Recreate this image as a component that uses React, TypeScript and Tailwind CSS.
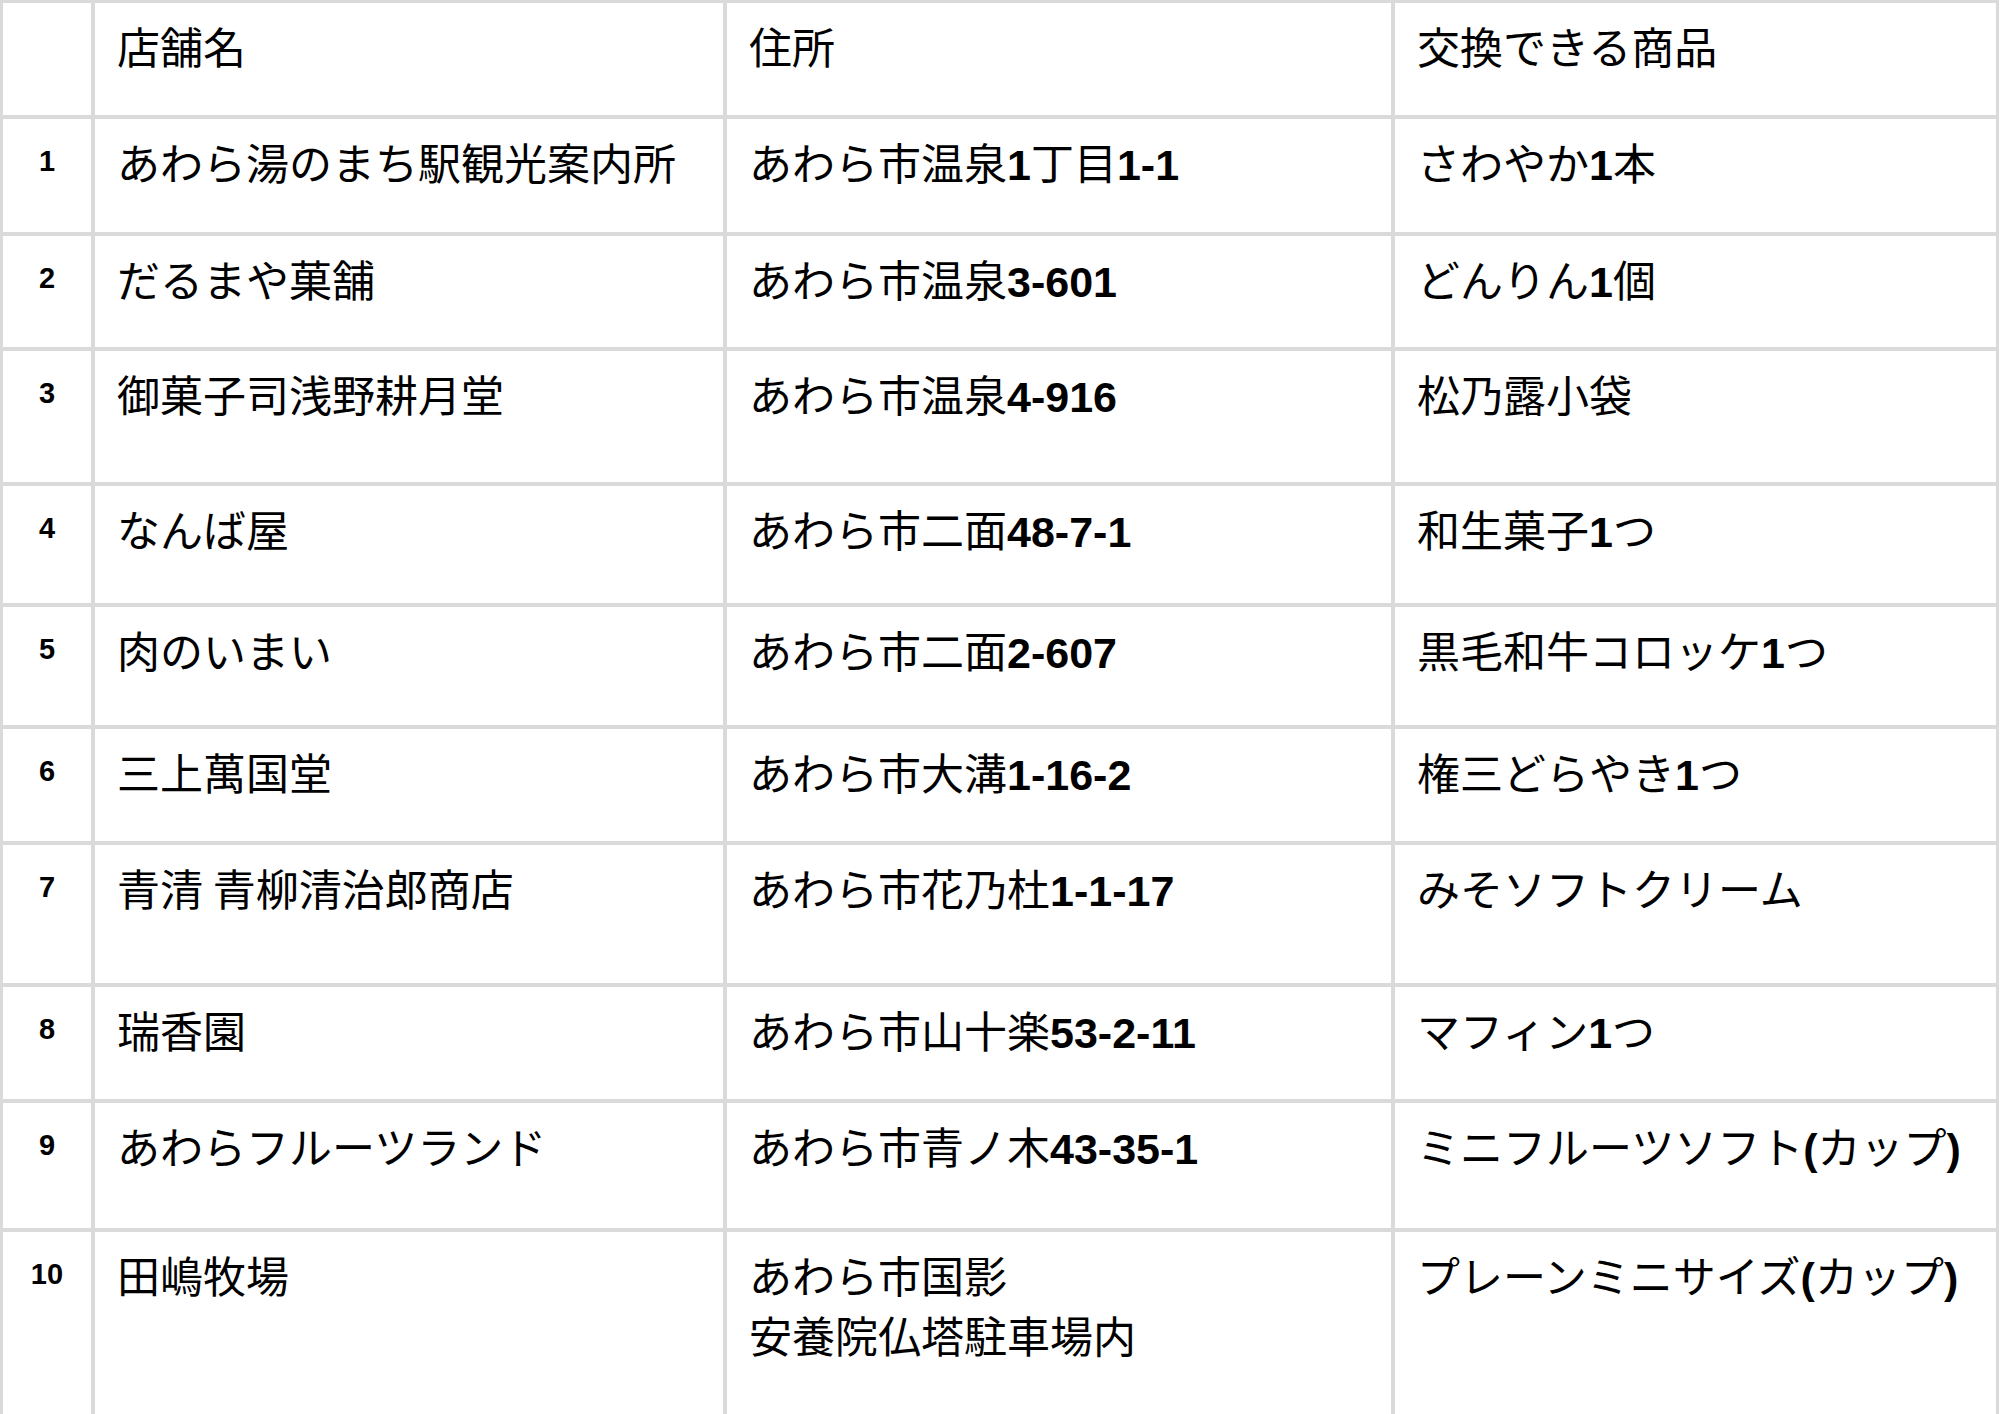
type Row = {
  no: string;
  name: string;
  address: string[];
  item: string;
  h: string;
};

const rows: Row[] = [
  { no: '1', name: 'あわら湯のまち駅観光案内所', address: ['あわら市温泉1丁目1-1'], item: 'さわやか1本', h: 'h-[113px]' },
  { no: '2', name: 'だるまや菓舗', address: ['あわら市温泉3-601'], item: 'どんりん1個', h: 'h-[111px]' },
  { no: '3', name: '御菓子司浅野耕月堂', address: ['あわら市温泉4-916'], item: '松乃露小袋', h: 'h-[131px]' },
  { no: '4', name: 'なんば屋', address: ['あわら市二面48-7-1'], item: '和生菓子1つ', h: 'h-[117px]' },
  { no: '5', name: '肉のいまい', address: ['あわら市二面2-607'], item: '黒毛和牛コロッケ1つ', h: 'h-[118px]' },
  { no: '6', name: '三上萬国堂', address: ['あわら市大溝1-16-2'], item: '権三どらやき1つ', h: 'h-[112px]' },
  { no: '7', name: '青清 青柳清治郎商店', address: ['あわら市花乃杜1-1-17'], item: 'みそソフトクリーム', h: 'h-[138px]' },
  { no: '8', name: '瑞香園', address: ['あわら市山十楽53-2-11'], item: 'マフィン1つ', h: 'h-[112px]' },
  { no: '9', name: 'あわらフルーツランド', address: ['あわら市青ノ木43-35-1'], item: 'ミニフルーツソフト(カップ)', h: 'h-[125px]' },
  { no: '10', name: '田嶋牧場', address: ['あわら市国影', '安養院仏塔駐車場内'], item: 'プレーンミニサイズ(カップ)', h: 'h-[200px]' },
];

// latin runs (digits, hyphen, parens) come out bold in the original
function Mixed({ text }: { text: string }) {
  const parts = text.split(/([0-9()\-]+)/);
  return (
    <>
      {parts.map((p, i) =>
        /^[0-9()\-]+$/.test(p) ? (
          <span key={i} className="font-['Liberation_Sans',sans-serif] font-bold">
            {p}
          </span>
        ) : (
          <span key={i}>{p}</span>
        )
      )}
    </>
  );
}

function Cell({ children, h }: { children: React.ReactNode; h: string }) {
  return <div className={`bg-white pl-[22px] pt-[12px] leading-[60px] ${h}`}>{children}</div>;
}

export default function App() {
  return (
    <div className="min-h-screen bg-white font-['Noto_Sans_CJK_JP',sans-serif] text-[43px] text-black">
      <div className="grid w-[1999px] grid-cols-[88px_628px_664px_601px] gap-[4px] bg-[#dadada] p-[3px]">
        <div className="h-[112px] bg-white" />
        <Cell h="h-[112px]">店舗名</Cell>
        <Cell h="h-[112px]">住所</Cell>
        <Cell h="h-[112px]">交換できる商品</Cell>

        {rows.map((r) => (
          <div key={r.no} className="contents">
            <div
              className={`bg-white pt-[28px] text-center font-['Liberation_Sans',sans-serif] text-[29px] font-bold leading-[29px] ${r.h}`}
            >
              {r.no}
            </div>
            <Cell h={r.h}>{r.name}</Cell>
            <Cell h={r.h}>
              {r.address.map((line, i) => (
                <div key={i}>
                  <Mixed text={line} />
                </div>
              ))}
            </Cell>
            <Cell h={r.h}>
              <Mixed text={r.item} />
            </Cell>
          </div>
        ))}
      </div>
    </div>
  );
}
